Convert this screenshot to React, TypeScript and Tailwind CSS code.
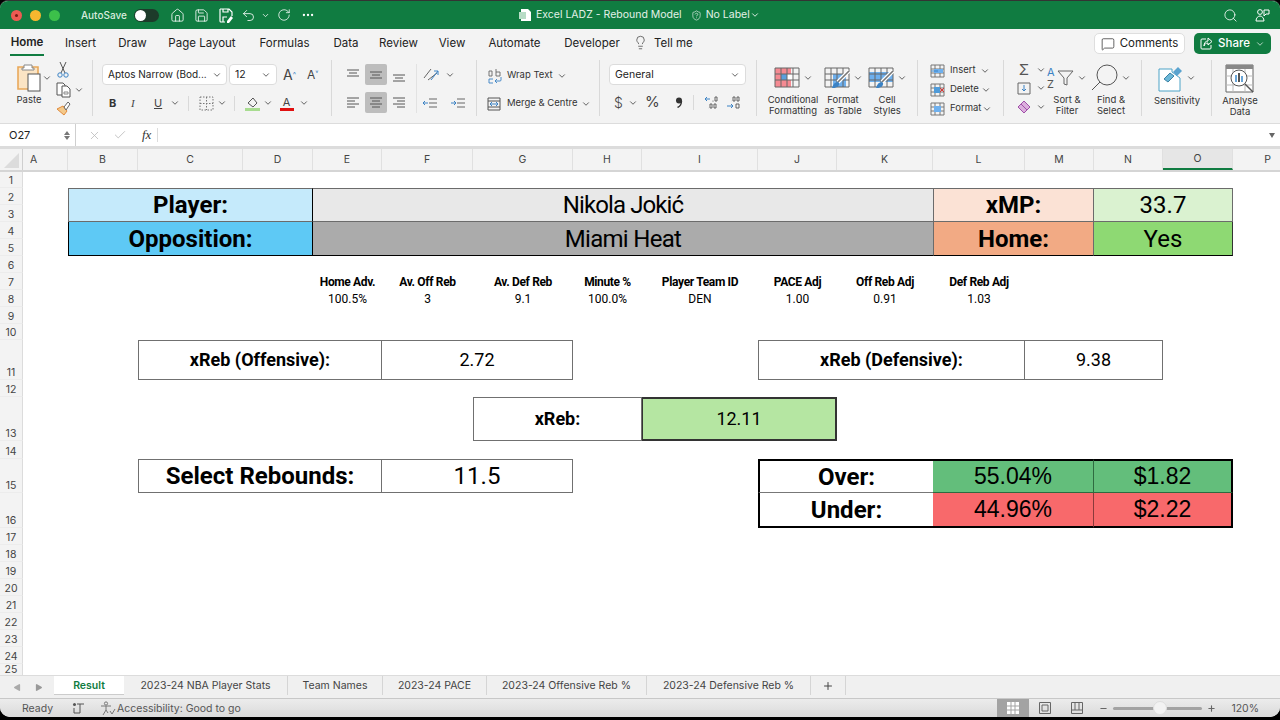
import { ChevronDown, Home, Save, Undo2, RotateCw, MoreHorizontal, Search, Lightbulb, MessageSquare, ShieldQuestion, Check, X, Plus, Minus, Play } from "lucide-react";
import type { ReactNode } from "react";

const UI = "font-['Inter','Liberation_Sans',sans-serif]";
const SHEET = "font-['Roboto','Liberation_Sans',sans-serif]";

const COLS = ["A", "B", "C", "D", "E", "F", "G", "H", "I", "J", "K", "L", "M", "N", "O", "P"];
const TOP_TABS = ["Home", "Insert", "Draw", "Page Layout", "Formulas", "Data", "Review", "View", "Automate", "Developer"];
const TAB_GAPS: Record<string, string> = {
  Home: "w-[34px] ml-[10px]",
  Insert: "w-[33px] ml-[20px]",
  Draw: "w-[29px] ml-[21px]",
  "Page Layout": "w-[68px] ml-[21px]",
  Formulas: "w-[51px] ml-[23px]",
  Data: "w-[26px] ml-[23px]",
  Review: "w-[39px] ml-[20px]",
  View: "w-[26px] ml-[21px]",
  Automate: "w-[53px] ml-[23px]",
  Developer: "w-[56px] ml-[23px]",
};
const SHEET_TABS = [
  { name: "2023-24 NBA Player Stats", w: "w-[164px]" },
  { name: "Team Names", w: "w-[95px]" },
  { name: "2023-24 PACE", w: "w-[104px]" },
  { name: "2023-24 Offensive Reb %", w: "w-[160px]" },
  { name: "2023-24 Defensive Reb %", w: "w-[164px]" },
];
const ROW_H = "grid-rows-[16px_17px_17px_17px_17px_17px_17px_17px_17px_16px_40px_17px_44px_18px_34px_35px_17px_17px_17px_17px_17px_17px_17px_17px_11px]";
const COL_W = "grid-cols-[23px_45px_70px_105px_70px_69px_91px_100px_69px_116px_79px_96px_92px_69px_69px_70px_47px]";

const Chev = ({ className = "" }: { className?: string }) => (
  <ChevronDown size={10} strokeWidth={2} className={`text-[#444] shrink-0 ${className}`} />
);

const Svg = ({ w, h, children, className = "" }: { w: number; h: number; children: ReactNode; className?: string }) => (
  <svg width={w} height={h} viewBox={`0 0 ${w} ${h}`} fill="none" className={`shrink-0 ${className}`}>{children}</svg>
);

function Lines({ kind }: { kind: string }) {
  const rows: Record<string, number[][]> = {
    top: [[1, 13, 3], [3, 11, 6], [1, 13, 9]],
    mid: [[1, 13, 5], [3, 11, 8], [1, 13, 11]],
    bot: [[1, 13, 8], [3, 11, 11], [1, 13, 14]],
    left: [[1, 13, 3], [1, 9, 6], [1, 13, 9], [1, 9, 12]],
    center: [[1, 13, 3], [3, 11, 6], [1, 13, 9], [3, 11, 12]],
    right: [[1, 13, 3], [5, 13, 6], [1, 13, 9], [5, 13, 12]],
  };
  return (
    <Svg w={14} h={15}>
      {rows[kind].map((r, i) => <path key={i} d={`M${r[0]} ${r[2]}H${r[1]}`} stroke="#555" strokeWidth="1" />)}
    </Svg>
  );
}

const TableIcon = ({ fill }: { fill: "cond" | "table" | "cell" }) => (
  <Svg w={26} h={21}>
    {fill === "cond" && <><rect x="1" y="1" width="16" height="19" fill="#f58a92" /><rect x="7" y="7" width="6" height="6" fill="#5a9fdc" /><rect x="13" y="7" width="7" height="6" fill="#fff" /></>}
    {fill === "table" && <path d="M9 7h13v13H9z" fill="#6eb0ee" />}
    {fill === "cell" && <path d="M1 5h24v10H1z" fill="#6eb0ee" />}
    <path d="M1 1h24v19H1zM1 7h24M1 13h24M7 1v19M13 1v19M19 1v19" stroke="#666" strokeWidth="1" />
    {fill !== "cond" && <><path d="M25 4 14 15" stroke="#fff" strokeWidth="4" /><path d="M25 4 14 15" stroke="#777" strokeWidth="1.6" /><path d="M8 21c1-4 3-6 6-6 2 1 1 4-1 5-2 1-3 1-5 1z" fill="#3b82c4" /></>}
  </Svg>
);

function BigButton({ icon, label, w, chev = true }: { icon: ReactNode; label: ReactNode; w: string; chev?: boolean }) {
  return (
    <div className={`flex flex-col items-center ${w}`}>
      <div className="h-[34px] flex items-center gap-[3px] pt-[2px]">
        {icon}
        {chev && <Chev />}
      </div>
      <div className="text-[9.5px] leading-[11px] text-center text-[#333] mt-[1px]">{label}</div>
    </div>
  );
}

function CellRow({ icon, label, chevMl }: { icon: ReactNode; label: string; chevMl: string }) {
  return (
    <div className="flex items-center h-[19px]">
      {icon}
      <span className="text-[9.5px] text-[#333] ml-[5px]">{label}</span>
      <Chev className={chevMl} />
    </div>
  );
}

function Ribbon() {
  return (
    <div className={`flex h-[63px] bg-[#f3f3f3] ${UI}`}>
      {/* Clipboard */}
      <div className="w-[93px] h-[56px] border-r border-[#d9d9d9] flex pl-[14px]">
        <div className="flex flex-col items-center w-[30px]">
          <Svg w={26} h={29} className="mt-[3px]">
            <path d="M2 4h20v22H2z" fill="#fbe4c4" stroke="#e9a85a" strokeWidth="1.6" />
            <path d="M8 5V2h8v3h2v2H6V5z" fill="#fff" stroke="#888" strokeWidth="1" />
            <rect x="12" y="11" width="12" height="17" fill="#fff" stroke="#555" strokeWidth="1" />
          </Svg>
          <span className="text-[9.5px] text-[#333] leading-[11px] mt-[2px]">Paste</span>
        </div>
        <Chev className="mt-[13px] ml-[-2px]" />
        <div className="flex flex-col ml-[4px] mt-[1px] gap-[2px]">
          <Svg w={14} h={18}>
            <path d="M4 1l5 11M10 1 5 12" stroke="#555" strokeWidth="1" />
            <circle cx="4" cy="14" r="2.2" stroke="#3b82c4" /><circle cx="10" cy="14" r="2.2" stroke="#3b82c4" />
          </Svg>
          <div className="flex items-center gap-[3px]">
            <Svg w={15} h={17}>
              <path d="M1 2h6l2 2v10H1z" stroke="#555" fill="#fff" /><path d="M6 5h5l3 3v8H6z" stroke="#555" fill="#fff" /><path d="M8 11h4v2H8z" stroke="#888" />
            </Svg>
            <Chev />
          </div>
          <Svg w={15} h={16}>
            <path d="M1 9l6-3 4 5-3 4z" fill="#f4c98a" stroke="#e08a3c" /><path d="M8 7l4-5 2 2-4 6z" stroke="#666" fill="#fff" />
          </Svg>
        </div>
      </div>

      {/* Font */}
      <div className="w-[239px] h-[56px] border-r border-[#d9d9d9] pl-[9px] pt-[4px]">
        <div className="flex items-center h-[21px]">
          <div className="w-[125px] h-[21px] bg-white rounded-[4px] border border-[#dcdcdc] flex items-center justify-between pl-[5px] pr-[4px]">
            <span className="text-[10px] text-[#222] whitespace-nowrap">Aptos Narrow (Bod...</span><Chev />
          </div>
          <div className="w-[48px] h-[21px] ml-[2px] bg-white rounded-[4px] border border-[#dcdcdc] flex items-center justify-between px-[5px]">
            <span className="text-[10.5px] text-[#222]">12</span><Chev />
          </div>
          <span className="ml-[6px] text-[14px] text-[#444] w-[24px]">A<sup className="text-[7px] text-[#3b82c4]">^</sup></span>
          <span className="text-[12px] text-[#444]">A<sup className="text-[7px] text-[#3b82c4]">˅</sup></span>
        </div>
        <div className="flex items-center h-[20px] mt-[8px] pl-[7px]">
          <span className="text-[11px] font-bold text-[#333] w-[22px]">B</span>
          <span className="text-[11px] italic text-[#444] font-['Liberation_Serif',serif] w-[23px]">I</span>
          <span className="text-[11px] underline text-[#444] w-[16px]">U</span>
          <Chev />
          <div className="w-px h-[15px] bg-[#d9d9d9] ml-[8px]" />
          <Svg w={15} h={15} className="ml-[10px]">
            <path d="M1 1h13v13H1z" stroke="#777" strokeDasharray="1.5 1.5" /><path d="M7.5 1v13M1 7.5h13" stroke="#777" strokeDasharray="1.5 1.5" />
          </Svg>
          <Chev className="ml-[3px]" />
          <div className="w-px h-[15px] bg-[#d9d9d9] ml-[7px]" />
          <Svg w={15} h={15} className="ml-[10px]">
            <path d="M3 7l5-5 4 5-4 4z" stroke="#555" /><path d="M0 12h15v3H0z" fill="#a8dc90" />
          </Svg>
          <Chev className="ml-[3px]" />
          <div className="flex flex-col items-center w-[15px] ml-[6px]">
            <span className="text-[11px] leading-[12px] text-[#444]">A</span>
            <span className="w-[14px] h-[3px] bg-[#e01010]" />
          </div>
          <Chev className="ml-[5px]" />
        </div>
      </div>

      {/* Alignment */}
      <div className="w-[145px] h-[56px] border-r border-[#d9d9d9] flex pl-[10px] pt-[4px]">
        <div className="grid grid-cols-[22px_22px_22px] grid-rows-[21px_21px] gap-x-[1px] gap-y-[7px]">
          <div className="flex items-center justify-center"><Lines kind="top" /></div>
          <div className="flex items-center justify-center bg-[#bdbdbd] rounded-[2px]"><Lines kind="mid" /></div>
          <div className="flex items-center justify-center"><Lines kind="bot" /></div>
          <div className="flex items-center justify-center"><Lines kind="left" /></div>
          <div className="flex items-center justify-center bg-[#bdbdbd] rounded-[2px]"><Lines kind="center" /></div>
          <div className="flex items-center justify-center"><Lines kind="right" /></div>
        </div>
        <div className="w-px h-[49px] bg-[#e2e2e2] ml-[6px]" />
        <div className="flex flex-col ml-[6px]">
          <div className="flex items-center h-[21px] gap-[5px]">
            <Svg w={17} h={15}>
              <path d="M1 11 8 2M5 13l9-7" stroke="#666" /><path d="M8 13l7-9m0 0h-4m4 0v4" stroke="#3b82c4" />
            </Svg>
            <Chev />
          </div>
          <div className="flex items-center h-[21px] mt-[7px] gap-[14px]">
            <Svg w={14} h={12}><path d="M6 2h8M6 6h8M6 10h8" stroke="#666" /><path d="M5 6H0m2-2L0 6l2 2" stroke="#3b82c4" /></Svg>
            <Svg w={14} h={12}><path d="M6 2h8M6 6h8M6 10h8" stroke="#666" /><path d="M0 6h5M3 4l2 2-2 2" stroke="#3b82c4" /></Svg>
          </div>
        </div>
      </div>

      {/* Wrap / merge */}
      <div className="w-[123px] h-[56px] border-r border-[#d9d9d9] pl-[10px] pt-[5px]">
        <div className="flex items-center h-[21px]">
          <Svg w={16} h={16}>
            <path d="M2 3h3v5H2zM9 1v7h4V4H9" stroke="#666" strokeWidth="0.9" />
            <path d="M6 11H2v4h4M14 9v3a1 1 0 0 1-1 1H8m2-2-2 2 2 2" stroke="#3b82c4" strokeWidth="0.9" />
          </Svg>
          <span className="text-[9.5px] text-[#333] ml-[4px]">Wrap Text</span>
          <Chev className="ml-[4px]" />
        </div>
        <div className="flex items-center h-[21px] mt-[7px]">
          <Svg w={14} h={14}><path d="M1 1h12v12H1zM1 4h12M1 10h12" stroke="#555" /><path d="M3 7h8M3 7l2-2M3 7l2 2M11 7 9 5m2 2L9 9" stroke="#3b82c4" /></Svg>
          <span className="text-[9.5px] text-[#333] ml-[6px]">Merge &amp; Centre</span>
          <Chev className="ml-[3px]" />
        </div>
      </div>

      {/* Number */}
      <div className="w-[157px] h-[56px] border-r border-[#d9d9d9] pl-[9px] pt-[4px]">
        <div className="w-[137px] h-[21px] bg-white rounded-[4px] border border-[#dcdcdc] flex items-center justify-between px-[5px]">
          <span className="text-[10.5px] text-[#222]">General</span><Chev />
        </div>
        <div className="flex items-center h-[21px] mt-[7px] pl-[5px]">
          <span className="text-[14px] font-light text-[#444] w-[13px]">$</span>
          <Chev className="ml-[1px]" />
          <span className="text-[15px] text-[#444] ml-[7px] w-[20px]">%</span>
          <Svg w={8} h={11} className="ml-[10px]">
            <circle cx="4" cy="3.500" r="3" fill="#333" /><path d="M6.500 4C6.500 7 5 9.500 2.500 10.500" stroke="#333" strokeWidth="1.4" />
          </Svg>
          <div className="w-px h-[15px] bg-[#d9d9d9] ml-[10px]" />
          <Svg w={15} h={15} className="ml-[10px]">
            <path d="M6 4H1m2-2L1 4l2 2" stroke="#3b82c4" />
            <circle cx="9" cy="6" r=".6" fill="#555" /><path d="M11 2h2v4h-2zM4 13h.1" stroke="#555" strokeWidth="0.9" /><path d="M6 9h2v4H6zM10 9h2v4h-2z" stroke="#555" strokeWidth="0.9" />
          </Svg>
          <Svg w={15} h={15} className="ml-[7px]">
            <path d="M5 6h.1" stroke="#555" /><path d="M7 2h2v4H7zM11 2h2v4h-2z" stroke="#555" strokeWidth="0.9" />
            <path d="M1 11h6m-2-2 2 2-2 2" stroke="#3b82c4" /><path d="M10 9h3v4h-3z" stroke="#555" strokeWidth="0.9" />
          </Svg>
        </div>
      </div>

      {/* Styles */}
      <div className="w-[161px] h-[56px] border-r border-[#d9d9d9] flex pl-[10px]">
        <BigButton w="w-[52px]" icon={<TableIcon fill="cond" />} label={<>Conditional<br />Formatting</>} />
        <BigButton w="w-[48px]" icon={<TableIcon fill="table" />} label={<>Format<br />as Table</>} />
        <BigButton w="w-[40px]" icon={<TableIcon fill="cell" />} label={<>Cell<br />Styles</>} />
      </div>

      {/* Cells */}
      <div className="w-[86px] h-[56px] border-r border-[#d9d9d9] pl-[12px] pt-[1px]">
        <CellRow label="Insert" chevMl="ml-[4px]" icon={<Svg w={15} h={14}><path d="M1 1h13v12H1zM1 5h13M1 9h13M5 1v12M10 1v12" stroke="#777" /><path d="M4 5h9v4H4z" fill="#6eb0ee" /><path d="M8 7H1" stroke="#3b82c4" /></Svg>} />
        <CellRow label="Delete" chevMl="ml-[2px]" icon={<Svg w={15} h={14}><path d="M1 1h13v12H1zM1 5h13M1 9h13M5 1v12M10 1v12" stroke="#777" /><rect x="4" y="4" width="6" height="6" fill="#4f9bd9" /><path d="M10 5l4 4m0-4-4 4" stroke="#d33" /></Svg>} />
        <CellRow label="Format" chevMl="ml-[1px]" icon={<Svg w={15} h={15}><path d="M1 2h13v12H1zM1 6h13M1 10h13M5 2v12M10 2v12" stroke="#777" /><path d="M4 5h7v6H4z" fill="#6eb0ee" /></Svg>} />
      </div>

      {/* Editing */}
      <div className="w-[138px] h-[56px] border-r border-[#d9d9d9] flex pl-[13px]">
        <div className="flex flex-col w-[30px] shrink-0 pt-[1px]">
          <div className="flex items-center h-[19px] gap-[5px]">
            <span className="w-[14px] text-[15px] leading-[16px] text-[#555] text-center">Σ</span><Chev />
          </div>
          <div className="flex items-center h-[19px] gap-[5px]">
            <Svg w={14} h={13}><path d="M1 1h12v11H1z" stroke="#666" /><path d="M7 3v6M5 7l2 2 2-2" stroke="#3b82c4" /></Svg><Chev />
          </div>
          <div className="flex items-center h-[19px] gap-[5px]">
            <Svg w={14} h={14}><path d="M1 7l6-6 6 6-6 6z" fill="#dcaedd" stroke="#a04fa8" /><path d="M4 4l6 6" stroke="#a04fa8" /></Svg><Chev />
          </div>
        </div>
        <BigButton w="w-[40px]" icon={
          <div className="flex items-center">
            <div className="text-[11px] leading-[12px] w-[10px]"><span className="text-[#3b82c4]">A</span><br /><span className="text-[#555]">Z</span></div>
            <Svg w={17} h={19}><path d="M1 3h15l-6 7v7l-3-1v-6z" stroke="#666" /></Svg>
          </div>
        } label={<>Sort &amp;<br />Filter</>} />
        <BigButton w="w-[48px]" icon={
          <Svg w={27} h={27}><circle cx="16" cy="11" r="10" stroke="#555" /><path d="M9 18 1 26" stroke="#555" /></Svg>
        } label={<>Find &amp;<br />Select</>} />
      </div>

      {/* Sensitivity */}
      <div className="w-[70px] h-[56px] border-r border-[#d9d9d9]">
        <BigButton w="w-[70px]" icon={
          <Svg w={25} h={27}>
            <path d="M1 4h13l0 0v3l8 6v13H1z" fill="#fff" stroke="#4da3c7" />
            <path d="M6 14l6-6 4 3-6 6z" fill="#6db8d8" stroke="#3b82a4" /><path d="M15 7l5-5 4 4-5 5z" fill="#5aa3cf" />
          </Svg>
        } label="Sensitivity" />
      </div>

      {/* Analyse */}
      <div className="w-[56px] h-[56px]">
        <BigButton w="w-[56px]" chev={false} icon={
          <Svg w={30} h={29}>
            <path d="M1 1h27v27H1z" fill="#fff" stroke="#666" /><path d="M1 1h27v4H1z" fill="#888" />
            <path d="M1 12h27M1 21h27M8 5v23M20 5v23" stroke="#bbb" />
            <circle cx="14" cy="14" r="8" fill="#fff" stroke="#555" />
            <path d="M10 11h2v7h-2z" fill="#6aa6d8" /><path d="M13 9h2v9h-2z" fill="#555" /><path d="M16 12h2v6h-2z" fill="#6aa6d8" />
            <path d="M20 20l8 8" stroke="#555" strokeWidth="1.4" />
          </Svg>
        } label={<>Analyse<br />Data</>} />
      </div>
    </div>
  );
}

function Cell({ className, children }: { className: string; children: ReactNode }) {
  return <div className={`flex items-center justify-center leading-none text-black min-w-0 whitespace-nowrap ${className}`}>{children}</div>;
}

const STATS = [
  { head: "Home Adv.", val: "100.5%", col: "col-start-6" },
  { head: "Av. Off Reb", val: "3", col: "col-start-7" },
  { head: "Av. Def Reb", val: "9.1", col: "col-start-8" },
  { head: "Minute %", val: "100.0%", col: "col-start-9" },
  { head: "Player Team ID", val: "DEN", col: "col-start-10" },
  { head: "PACE Adj", val: "1.00", col: "col-start-11" },
  { head: "Off Reb Adj", val: "0.91", col: "col-start-12" },
  { head: "Def Reb Adj", val: "1.03", col: "col-start-13" },
];

function Sheet() {
  return (
    <div className={`h-[503px] overflow-hidden bg-white grid ${COL_W} ${ROW_H} ${SHEET}`}>
      {/* top block */}
      <Cell className="col-start-3 col-span-3 row-start-2 row-span-2 bg-[#c5eafb] border border-[#6b6b6b] border-r-black text-[24px] font-bold">Player:</Cell>
      <Cell className="col-start-3 col-span-3 row-start-4 row-span-2 bg-[#5ec9f5] border border-t-0 border-black border-l-black text-[24px] font-bold">Opposition:</Cell>
      <Cell className="col-start-6 col-span-7 row-start-2 row-span-2 bg-[#e8e8e8] border-y border-[#6b6b6b] text-[24px] tracking-[-0.9px]">Nikola Jokić</Cell>
      <Cell className="col-start-6 col-span-7 row-start-4 row-span-2 bg-[#ababab] border-b border-black text-[24px] tracking-[-0.7px]">Miami Heat</Cell>
      <Cell className="col-start-13 col-span-2 row-start-2 row-span-2 bg-[#fbe2d5] border border-[#6b6b6b] text-[24px] font-bold">xMP:</Cell>
      <Cell className="col-start-13 col-span-2 row-start-4 row-span-2 bg-[#f2aa84] border border-t-0 border-[#6b6b6b] border-b-black text-[24px] font-bold">Home:</Cell>
      <Cell className="col-start-15 col-span-2 row-start-2 row-span-2 bg-[#daf2d0] border border-l-0 border-[#6b6b6b] text-[24px]">33.7</Cell>
      <Cell className="col-start-15 col-span-2 row-start-4 row-span-2 bg-[#8ed973] border border-l-0 border-t-0 border-[#333] border-b-black text-[24px]">Yes</Cell>

      {/* stat strip */}
      {STATS.map((s) => (
        <Cell key={s.head} className={`${s.col} row-start-7 text-[12px] font-bold tracking-[-0.35px]`}>{s.head}</Cell>
      ))}
      {STATS.map((s) => (
        <Cell key={s.val + s.head} className={`${s.col} row-start-8 text-[12px] text-[#222]`}>{s.val}</Cell>
      ))}

      {/* xReb boxes */}
      <Cell className="col-start-4 col-span-3 row-start-11 border border-[#707070] text-[18px] font-bold">xReb (Offensive):</Cell>
      <Cell className="col-start-7 col-span-2 row-start-11 border border-l-0 border-[#707070] text-[18px]">2.72</Cell>
      <Cell className="col-start-11 col-span-3 row-start-11 border border-[#707070] text-[18px] font-bold">xReb (Defensive):</Cell>
      <Cell className="col-start-14 col-span-2 row-start-11 border border-l-0 border-[#707070] text-[18px]">9.38</Cell>
      <Cell className="col-start-8 col-span-2 row-start-13 border border-[#707070] text-[18px] font-bold">xReb:</Cell>
      <Cell className="col-start-10 col-span-2 row-start-13 bg-[#b5e6a2] border-2 border-l border-[#333] text-[18px]">12.11</Cell>

      <Cell className="col-start-4 col-span-3 row-start-15 border border-[#707070] text-[24px] font-bold">Select Rebounds:</Cell>
      <Cell className="col-start-7 col-span-2 row-start-15 border border-l-0 border-[#707070] text-[24px]">11.5</Cell>

      {/* odds table */}
      <Cell className="col-start-11 col-span-2 row-start-15 border-2 border-b border-r-0 border-black border-b-[#777] text-[24px] font-bold">Over:</Cell>
      <Cell className="col-start-11 col-span-2 row-start-16 border-2 border-t-0 border-r-0 border-black text-[24px] font-bold">Under:</Cell>
      <Cell className="col-start-13 col-span-2 row-start-15 bg-[#63be7b] border-t-2 border-r border-b border-t-black border-[#2f6b40] text-[23px] font-['Liberation_Sans',sans-serif]">55.04%</Cell>
      <Cell className="col-start-15 col-span-2 row-start-15 bg-[#63be7b] border-t-2 border-r-2 border-b border-t-black border-r-black border-b-[#2f6b40] text-[23px] font-['Liberation_Sans',sans-serif]">$1.82</Cell>
      <Cell className="col-start-13 col-span-2 row-start-16 bg-[#f8696b] border-b-2 border-r border-b-black border-[#8a3a3b] text-[23px] font-['Liberation_Sans',sans-serif]">44.96%</Cell>
      <Cell className="col-start-15 col-span-2 row-start-16 bg-[#f8696b] border-b-2 border-r-2 border-black text-[23px] font-['Liberation_Sans',sans-serif]">$2.22</Cell>

      {/* row headers */}
      {Array.from({ length: 25 }, (_, i) => (
        <div key={i} className={`col-start-1 bg-[#f3f3f3] border-r border-[#dcdcdc] flex items-end justify-center text-[10.5px] text-[#444] ${i === 24 ? "leading-[11px]" : "leading-[13px] border-b border-b-[#ececec]"} ${UI}`}>{i + 1}</div>
      ))}
    </div>
  );
}

export default function App() {
  return (
    <div className={`w-[1280px] h-[720px] bg-black overflow-hidden ${UI}`}>
      <div className="h-[717px] rounded-b-[10px] rounded-t-[8px] overflow-hidden flex flex-col bg-[#f3f3f3] border-t border-[#333]">
        {/* Title bar */}
        <div className="h-[28px] bg-[#107c41] flex items-center text-white shrink-0">
          <div className="flex items-center gap-[8px] ml-[11px] w-[70px]">
            <span className="w-[11px] h-[11px] rounded-full bg-[#ee5a52] flex items-center justify-center"><span className="w-[3px] h-[3px] rounded-full bg-[#7a1a14]" /></span>
            <span className="w-[11px] h-[11px] rounded-full bg-[#f5b72f]" />
            <span className="w-[11px] h-[11px] rounded-full bg-[#3cc04a]" />
          </div>
          <span className="text-[10px] font-medium text-[#d9ecdf] w-[44px] whitespace-nowrap">AutoSave</span>
          <div className="w-[25px] h-[13px] rounded-full bg-[#1d3b2a] ml-[9px] flex items-center"><span className="w-[11px] h-[11px] rounded-full bg-white ml-px" /></div>
          <Home size={15} strokeWidth={1.3} className="ml-[11px]" />
          <Save size={15} strokeWidth={1.3} className="ml-[9px]" />
          <Svg w={15} h={15} className="ml-[9px]">
            <path d="M2 1h9l3 3v4M7 14H3a1 1 0 0 1-1-1V1M5 1v3h5V1M5 14V9h4" stroke="#fff" strokeWidth="1.2" />
            <path d="M9 13l4-5 2 2-4 5H9z" fill="#fff" />
          </Svg>
          <Undo2 size={15} strokeWidth={1.3} className="ml-[8px]" />
          <ChevronDown size={9} strokeWidth={2} className="ml-[5px]" />
          <RotateCw size={14} strokeWidth={1.3} className="ml-[7px]" />
          <MoreHorizontal size={14} strokeWidth={2} className="ml-[10px]" />
          <div className="ml-[204px] flex items-center">
            <Svg w={13} h={14}><path d="M2 1h7l3 3v9H2z" fill="#fff" /><rect x="0" y="4" width="7" height="7" fill="#b8dcc6" /></Svg>
            <span className="text-[10.5px] text-[#e3f1e8] ml-[4px]">Excel LADZ - Rebound Model</span>
            <ShieldQuestion size={11} strokeWidth={1.3} className="ml-[9px]" />
            <span className="text-[10.5px] text-[#e3f1e8] ml-[4px]">No Label</span>
            <ChevronDown size={10} strokeWidth={2} />
          </div>
          <Search size={15} strokeWidth={1.3} className="ml-auto mr-[17px]" />
          <Svg w={15} h={15} className="mr-[10px]">
            <circle cx="5" cy="4" r="2.4" stroke="#fff" /><path d="M1 13c0-3 2-5 4-5s4 2 4 5z" stroke="#fff" /><path d="M9 2h5v4h-3l-2 2z" stroke="#fff" />
          </Svg>
        </div>

        {/* Menu tabs */}
        <div className="h-[31px] bg-[#f3f3f3] flex items-start shrink-0">
          {TOP_TABS.map((t) => (
            <div key={t} className={`${TAB_GAPS[t]} h-[24px] mt-[3px] flex items-center justify-center whitespace-nowrap text-[11.5px] text-[#222] ${t === "Home" ? "font-semibold border-b-2 border-[#107c41]" : ""}`}>{t}</div>
          ))}
          <Lightbulb size={15} strokeWidth={1.2} className="ml-[13px] mt-[6px] text-[#444]" />
          <span className="text-[11.5px] text-[#222] ml-[6px] mt-[6px]">Tell me</span>
          <div className="ml-auto mt-[4px] flex items-center mr-[9px] gap-[9px]">
            <div className="w-[91px] h-[21px] bg-white border border-[#dedede] rounded-[5px] flex items-center justify-center gap-[5px] text-[11.5px] text-[#222]">
              <MessageSquare size={14} strokeWidth={1.2} />Comments
            </div>
            <div className="w-[77px] h-[21px] bg-[#107c41] rounded-[5px] flex items-center justify-center gap-[5px] text-[11.5px] font-medium text-white">
              <Svg w={13} h={13}>
                <path d="M6 2H2a1 1 0 0 0-1 1v8a1 1 0 0 0 1 1h8a1 1 0 0 0 1-1V8" stroke="#fff" />
                <path d="M8 1l4 3.5L8 8V6C6 6 4.500 7 4 9c0-3 1.500-5 4-5z" stroke="#fff" />
              </Svg>
              Share<ChevronDown size={10} strokeWidth={1.6} />
            </div>
          </div>
        </div>

        <Ribbon />

        {/* Formula bar */}
        <div className="h-[26px] flex bg-white border-t border-b-[3px] border-[#dcdcdc] shrink-0">
          <div className="w-[76px] bg-white border-r border-[#cfcfcf] flex items-center pl-[9px] justify-between pr-[5px]">
            <span className="text-[11px] text-[#222]">O27</span>
            <div className="flex flex-col gap-[1px]"><span className="w-0 h-0 border-x-[3px] border-x-transparent border-b-[4px] border-b-[#777]" /><span className="w-0 h-0 border-x-[3px] border-x-transparent border-t-[4px] border-t-[#777]" /></div>
          </div>
          <div className="flex-1 flex items-center">
            <X size={13} strokeWidth={1.5} className="ml-[12px] text-[#bbb]" />
            <Check size={14} strokeWidth={1.5} className="ml-[12px] text-[#bbb]" />
            <span className="ml-[15px] text-[13px] italic font-['Liberation_Serif',serif] text-[#333]">fx</span>
            <span className="w-px h-[14px] bg-[#dcdcdc] ml-[6px]" />
            <span className="ml-auto mr-[5px] w-0 h-0 border-x-[3px] border-x-transparent border-t-[5px] border-t-[#666]" />
          </div>
        </div>

        {/* Column headers */}
        <div className={`grid ${COL_W} h-[23px] bg-[#f3f3f3] border-b-2 border-[#d5d5d5] shrink-0`}>
          <div className="border-r border-[#cfcfcf] flex items-end justify-end pr-[3px] pb-[2px]">
            <span className="w-0 h-0 border-l-[15px] border-l-transparent border-b-[15px] border-b-[#dcdcdc]" />
          </div>
          {COLS.map((c) => (
            <div key={c} className={`flex items-center justify-center text-[10.5px] text-[#444] border-r border-[#e0e0e0] ${c === "O" ? "bg-[#e6e6e6] border-b-2 border-b-[#107c41]" : ""} ${c === "A" ? "pr-[23px]" : ""} ${c === "P" ? "pl-[22px] border-r-0" : ""}`}>{c}</div>
          ))}
        </div>

        <Sheet />

        {/* Sheet tabs */}
        <div className="h-[23px] bg-[#f0f0f0] border-t border-[#dcdcdc] flex items-start shrink-0 text-[10.5px] text-[#444]">
          <div className="w-[54px] h-full flex items-center gap-[12px] pl-[13px] text-[#aaa]">
            <Play size={9} className="fill-[#aaa] rotate-180" strokeWidth={0} />
            <Play size={9} className="fill-[#999]" strokeWidth={0} />
          </div>
          <div className="w-[70px] h-[19px] pt-[1px] bg-white flex items-center justify-center font-semibold text-[#107c41] border-b border-[#ccc]">Result</div>
          {SHEET_TABS.map((t) => (
            <div key={t.name} className={`${t.w} h-[19px] pt-[1px] flex items-center justify-center border-r border-[#d5d5d5] whitespace-nowrap`}>{t.name}</div>
          ))}
          <div className="w-[35px] h-[19px] flex items-center justify-center border-r border-[#d5d5d5]"><Plus size={12} strokeWidth={2} className="text-[#444]" /></div>
        </div>

        {/* Status bar */}
        <div className="flex-1 bg-gradient-to-b from-[#ececec] to-[#dadada] border-t border-[#c8c8c8] flex items-center text-[10.5px] text-[#555]">
          <span className="ml-[22px] pt-[1px]">Ready</span>
          <Svg w={13} h={13} className="ml-[19px]">
            <circle cx="2.500" cy="2.500" r="1.500" fill="#555" /><path d="M5 2h7M8 2v9M2 11h6M2 6v5" stroke="#555" />
          </Svg>
          <Svg w={16} h={15} className="ml-[15px]">
            <circle cx="6" cy="2.500" r="1.600" stroke="#777" /><path d="M1 5h10M6 5v4l-3 5M6 9l2 3M10 10l2 3 3-5" stroke="#777" />
          </Svg>
          <span className="ml-[1px] pt-[1px]">Accessibility: Good to go</span>
          <div className="ml-auto w-[32px] h-full bg-[#a3a3a3] flex items-center justify-center">
            <Svg w={12} h={12}><path d="M0 0h12v12H0z" fill="#fff" /><path d="M4 0v12M8 0v12M0 4h12M0 8h12" stroke="#a3a3a3" /></Svg>
          </div>
          <div className="w-[32px] flex items-center justify-center">
            <Svg w={12} h={12}><path d="M.5.5h11v11H.5zM3 3h6v6H3z" stroke="#666" /></Svg>
          </div>
          <div className="w-[32px] flex items-center justify-center">
            <Svg w={12} h={12}><path d="M.5.5h11v11H.5zM.5 8h11M4 .5V8M8 .5V8" stroke="#666" /></Svg>
          </div>
          <Minus size={9} strokeWidth={3} className="ml-[6px] text-[#666]" />
          <div className="w-[89px] h-[3px] bg-[#a3a3a3] rounded-full ml-[5px] flex items-center pl-[40px]">
            <span className="w-[14px] h-[14px] rounded-full bg-[#f2f2f2] border border-[#ddd] shrink-0" />
          </div>
          <Plus size={9} strokeWidth={3} className="ml-[5px] text-[#666]" />
          <span className="ml-[15px] mr-[21px] pt-[1px] text-[#555]">120%</span>
        </div>
      </div>
    </div>
  );
}
